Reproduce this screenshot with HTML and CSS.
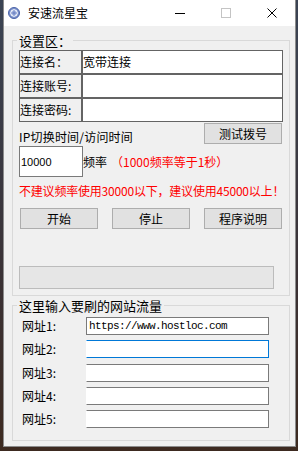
FILE: index.html
```html
<!DOCTYPE html>
<html lang="zh-CN">
<head>
<meta charset="utf-8">
<title>安速流星宝</title>
<link rel="stylesheet" href="styles.css">
</head>
<body>
<div class="window">
  <div class="titlebar">
    <svg class="app-icon" width="12" height="12" viewBox="0 0 12 12">
      <circle cx="6" cy="6" r="5.5" fill="#7c92cc" stroke="#4a63a8" stroke-width="1"/>
      <circle cx="6" cy="6" r="3.3" fill="#a9b9e4" stroke="#ffffff" stroke-width="1"/>
      <path d="M3.2 6h5.6M6 3.2v5.6" stroke="#5a72b6" stroke-width="0.8"/>
    </svg>
    <span class="title">安速流星宝</span>
    <div class="caption">
      <span class="cap-btn">
        <svg width="10" height="10" viewBox="0 0 10 10"><path d="M0 5.5h10" stroke="#000" stroke-width="1"/></svg>
      </span>
      <span class="cap-btn">
        <svg width="10" height="10" viewBox="0 0 10 10"><rect x="0.5" y="0.5" width="9" height="9" fill="none" stroke="#c4c4c4" stroke-width="1"/></svg>
      </span>
      <span class="cap-btn">
        <svg width="10" height="10" viewBox="0 0 10 10"><path d="M0.5 0.5l9 9M9.5 0.5l-9 9" stroke="#000" stroke-width="1"/></svg>
      </span>
    </div>
  </div>
  <div class="client">
    <fieldset class="group group-settings">
      <legend>设置区：</legend>
      <div class="conn-table">
        <div class="cell label">连接名：</div>
        <div class="cell value">宽带连接</div>
        <div class="cell label">连接账号:</div>
        <div class="cell value"></div>
        <div class="cell label">连接密码:</div>
        <div class="cell value"></div>
      </div>
      <div class="row-ip">
        <span class="ip-label">IP切换时间/访问时间</span>
        <button class="btn btn-test">测试拨号</button>
      </div>
      <div class="row-freq">
        <div class="freq-input">10000</div>
        <span class="freq-label">频率</span>
        <span class="red freq-note">（1000频率等于1秒）</span>
      </div>
      <div class="warning red">不建议频率使用30000以下，建议使用45000以上！</div>
      <div class="btn-row">
        <button class="btn">开始</button>
        <button class="btn">停止</button>
        <button class="btn">程序说明</button>
      </div>
      <div class="progress"></div>
    </fieldset>
    <fieldset class="group group-urls">
      <legend>这里输入要刷的网站流量</legend>
      <div class="url-list">
        <div class="url-row"><span class="url-label">网址1:</span><div class="url-input">https://www.hostloc.com</div></div>
        <div class="url-row"><span class="url-label">网址2:</span><div class="url-input focused noleft"></div></div>
        <div class="url-row"><span class="url-label">网址3:</span><div class="url-input noleft"></div></div>
        <div class="url-row"><span class="url-label">网址4:</span><div class="url-input noleft"></div></div>
        <div class="url-row"><span class="url-label">网址5:</span><div class="url-input noleft"></div></div>
      </div>
    </fieldset>
  </div>
</div>
</body>
</html>
```
FILE: styles.css
```css
html, body {
  margin: 0;
  padding: 0;
}
body {
  width: 298px;
  height: 451px;
  overflow: hidden;
  background: linear-gradient(180deg, #3b4454 0%, #3a3236 60%, #3d2a20 100%);
  font-family: "Noto Sans CJK SC", "Liberation Sans", sans-serif;
  font-size: 12px;
  line-height: 14px;
  color: #000;
}
.window {
  margin-left: 3px;
  width: 293px;
  height: 447px;
  box-sizing: border-box;
  border-left: 1px solid #8c8c8c;
  border-right: 1px solid #8c8c8c;
  border-bottom: 1px solid #8c8c8c;
  background: #f0f0f0;
  display: flex;
  flex-direction: column;
}
.titlebar {
  height: 26px;
  flex: none;
  background: #fff;
  display: flex;
  align-items: center;
  padding-left: 4px;
}
.app-icon {
  display: block;
  flex: none;
}
.title {
  margin-left: 8px;
  font-size: 12px;
  line-height: 14px;
}
.caption {
  margin-left: auto;
  display: flex;
  height: 26px;
}
.cap-btn {
  width: 46px;
  height: 26px;
  display: flex;
  align-items: center;
  justify-content: center;
}
.cap-btn svg {
  display: block;
}
.client {
  flex: 1;
  padding: 0 5px 0 8px;
}
fieldset.group {
  margin: 0;
  border: 1px solid #d9d9d9;
  min-width: 0;
  width: 278px;
  box-sizing: border-box;
}
.group legend {
  font-size: 13px;
  line-height: 15px;
  padding: 0 2px;
}
.group-settings {
  margin-top: 7px !important;
  padding: 2px 6px 6px 6px;
}
.group-settings legend {
  margin-left: -2px;
}
.conn-table {
  display: grid;
  grid-template-columns: 63px 201px;
}
.cell {
  height: 24px;
  box-sizing: border-box;
  border: 1px solid #646464;
  line-height: 22px;
  white-space: nowrap;
  overflow: hidden;
}
.cell.label {
  background: #f0f0f0;
}
.cell.value {
  background: #fff;
}
.row-ip {
  display: flex;
  justify-content: space-between;
  align-items: flex-end;
  margin-top: 1px;
}
.ip-label {
  line-height: 14px;
  letter-spacing: 0.2px;
}
.btn {
  width: 78px;
  height: 21px;
  box-sizing: border-box;
  border: 1px solid #adadad;
  background: #e1e1e1;
  font-family: "Noto Sans CJK SC", sans-serif;
  font-size: 12px;
  line-height: 19px;
  padding: 0;
  color: #000;
  border-radius: 0;
}
.btn-test {
  margin-right: 1px;
}
.row-freq {
  display: flex;
  align-items: center;
  margin-top: 2px;
}
.freq-input {
  width: 64px;
  height: 31px;
  box-sizing: border-box;
  border: 1px solid #7a7a7a;
  background: #fff;
  font-family: "Liberation Sans", sans-serif;
  font-size: 11px;
  display: flex;
  align-items: center;
  padding-left: 1px;
}
.red {
  color: #ff0000;
}
.freq-note {
  margin-left: 4px;
}
.warning {
  margin-top: 7px;
  white-space: nowrap;
  letter-spacing: -0.2px;
}
.btn-row {
  display: flex;
  gap: 14px;
  margin-top: 10px;
  padding-left: 1px;
}
.progress {
  margin-top: 37px;
  width: 255px;
  height: 23px;
  box-sizing: border-box;
  border: 1px solid #bcbcbc;
  background: #e6e6e6;
}
.group-urls {
  margin-top: 2px !important;
  padding: 4px 0 12px 9px;
}
.group-urls legend {
  margin-left: -5px;
}
.url-list {
  display: flex;
  flex-direction: column;
  gap: 5.25px;
}
.url-row {
  display: flex;
  align-items: center;
  height: 18px;
}
.url-label {
  width: 64px;
  flex: none;
}
.url-input {
  width: 183px;
  height: 18px;
  box-sizing: border-box;
  border: 1px solid #7a7a7a;
  background: #fff;
  font-family: "Liberation Mono", monospace;
  font-size: 11px;
  letter-spacing: -0.6px;
  line-height: 16px;
  padding-left: 2px;
  white-space: nowrap;
  overflow: hidden;
}
.url-input.focused {
  border-color: #0078d7;
}
.url-input.noleft {
  border-left-color: #fff;
}
```
